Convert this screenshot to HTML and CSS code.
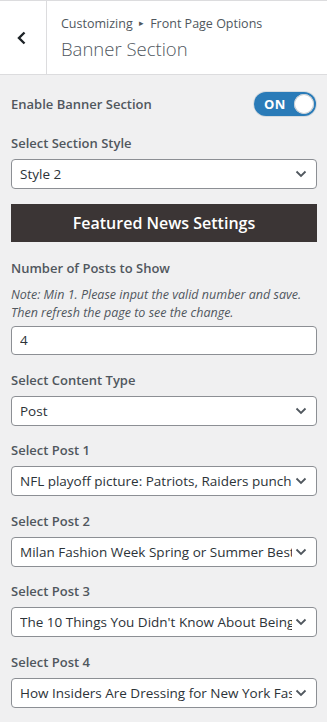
FILE: index.html
```html
<!DOCTYPE html>
<html lang="en">
<head>
    <meta charset="UTF-8">
    <meta name="viewport" content="width=device-width, initial-scale=1.0">
    <title>Customizing - Banner Section</title>
    <link rel="stylesheet" href="styles.css">
</head>
<body>
    <div class="panel-header">
        <button class="back-btn" aria-label="Back">
            <svg width="12" height="14" viewBox="0 0 12 14">
                <path d="M8.5 1.5 L3 7 L8.5 12.5" fill="none" stroke="#1d2327" stroke-width="2.4"/>
            </svg>
        </button>
        <div class="panel-title">
            <div class="crumbs">Customizing <span class="crumb-arrow">&#9656;</span> Front Page Options</div>
            <h2>Banner Section</h2>
        </div>
    </div>

    <div class="panel-body">
        <div class="toggle-row">
            <span class="control-title">Enable Banner Section</span>
            <span class="toggle">
                <span class="toggle-text">ON</span>
                <span class="toggle-knob"></span>
            </span>
        </div>

        <div class="control">
            <label class="control-title" for="section-style">Select Section Style</label>
            <div class="select-wrap">
                <select id="section-style">
                    <option>Style 2</option>
                </select>
                <svg class="select-arrow" width="12" height="8" viewBox="0 0 12 8"><path d="M1.5 1.5 L6 6 L10.5 1.5" fill="none" stroke="#50575e" stroke-width="1.8"/></svg>
            </div>
        </div>

        <div class="section-heading">Featured News Settings</div>

        <div class="control number-control">
            <label class="control-title note-title" for="post-count">Number of Posts to Show</label>
            <p class="description">Note: Min 1. Please input the valid number and save. Then refresh the page to see the change.</p>
            <input type="text" id="post-count" value="4">
        </div>

        <div class="control">
            <label class="control-title" for="content-type">Select Content Type</label>
            <div class="select-wrap">
                <select id="content-type">
                    <option>Post</option>
                </select>
                <svg class="select-arrow" width="12" height="8" viewBox="0 0 12 8"><path d="M1.5 1.5 L6 6 L10.5 1.5" fill="none" stroke="#50575e" stroke-width="1.8"/></svg>
            </div>
        </div>

        <div class="control">
            <label class="control-title" for="post-1">Select Post 1</label>
            <div class="select-wrap">
                <select id="post-1">
                    <option>NFL playoff picture: Patriots, Raiders punch their tickets</option>
                </select>
                <svg class="select-arrow" width="12" height="8" viewBox="0 0 12 8"><path d="M1.5 1.5 L6 6 L10.5 1.5" fill="none" stroke="#50575e" stroke-width="1.8"/></svg>
            </div>
        </div>

        <div class="control">
            <label class="control-title" for="post-2">Select Post 2</label>
            <div class="select-wrap">
                <select id="post-2">
                    <option>Milan Fashion Week Spring or Summer Best Looks</option>
                </select>
                <svg class="select-arrow" width="12" height="8" viewBox="0 0 12 8"><path d="M1.5 1.5 L6 6 L10.5 1.5" fill="none" stroke="#50575e" stroke-width="1.8"/></svg>
            </div>
        </div>

        <div class="control">
            <label class="control-title" for="post-3">Select Post 3</label>
            <div class="select-wrap">
                <select id="post-3">
                    <option>The 10 Things You Didn't Know About Being a Model</option>
                </select>
                <svg class="select-arrow" width="12" height="8" viewBox="0 0 12 8"><path d="M1.5 1.5 L6 6 L10.5 1.5" fill="none" stroke="#50575e" stroke-width="1.8"/></svg>
            </div>
        </div>

        <div class="control">
            <label class="control-title" for="post-4">Select Post 4</label>
            <div class="select-wrap">
                <select id="post-4">
                    <option>How Insiders Are Dressing for New York Fashion Week</option>
                </select>
                <svg class="select-arrow" width="12" height="8" viewBox="0 0 12 8"><path d="M1.5 1.5 L6 6 L10.5 1.5" fill="none" stroke="#50575e" stroke-width="1.8"/></svg>
            </div>
        </div>
    </div>
</body>
</html>
```

FILE: styles.css
```css
:root {
    --panel-bg: #f0f0f1;
    --border-color: #dcdcde;
    --text-color: #50575e;
    --field-text: #2c3338;
    --field-border: #8c8f94;
    --toggle-blue: #2a7bb8;
    --heading-bg: #3b3535;
}

* {
    box-sizing: border-box;
    margin: 0;
    padding: 0;
}

body {
    font-family: 'Open Sans', 'Noto Sans', sans-serif;
    font-size: 13px;
    color: var(--text-color);
    background-color: var(--panel-bg);
}

.panel-header {
    display: flex;
    background: white;
    border-top: 1px solid var(--border-color);
    border-bottom: 1px solid var(--border-color);
}

.back-btn {
    width: 47px;
    flex-shrink: 0;
    display: flex;
    align-items: center;
    justify-content: center;
    background: white;
    border: none;
    border-right: 1px solid var(--border-color);
    padding-right: 2px;
}

.panel-title {
    padding: 13px 14px 12px;
}

.crumbs {
    font-size: 12.5px;
    line-height: 18px;
    color: var(--text-color);
}

.crumb-arrow {
    font-size: 9px;
    vertical-align: 2px;
    margin: 0 3px;
}

.panel-title h2 {
    margin-top: 3px;
    font-size: 18.5px;
    font-weight: 300;
    line-height: 26px;
    color: var(--text-color);
}

.panel-body {
    padding: 17px 10px 14px 11px;
}

.control-title {
    display: block;
    font-weight: 600;
    line-height: 20px;
    margin-bottom: 6px;
}

.toggle-row {
    display: flex;
    justify-content: space-between;
    align-items: center;
    height: 24px;
    margin-bottom: 17px;
    padding-right: 1px;
}

.toggle-row .control-title {
    margin-bottom: 0;
}

.toggle {
    width: 62px;
    height: 24px;
    border-radius: 12px;
    background: var(--toggle-blue);
    box-shadow: 0 0 0 1px #d5dbe0;
    display: flex;
    align-items: center;
    justify-content: space-between;
    padding: 0 2px 0 10px;
}

.toggle-text {
    color: white;
    font-weight: 700;
    font-size: 13px;
    letter-spacing: 0.5px;
}

.toggle-knob {
    width: 20px;
    height: 20px;
    border-radius: 50%;
    background: white;
    box-shadow: inset 0 0 0 1px #c9cdd1;
}

.control {
    margin-bottom: 14.5px;
}

.number-control {
    margin-bottom: 15px;
}

.select-wrap {
    position: relative;
}

select,
input[type="text"] {
    display: block;
    width: 100%;
    height: 30px;
    border: 1px solid var(--field-border);
    border-radius: 4px;
    background: white;
    font-family: inherit;
    font-size: 13.5px;
    color: var(--field-text);
}

select {
    appearance: none;
    -webkit-appearance: none;
    padding: 0 24px 0 8px;
}

input[type="text"] {
    height: 29px;
    padding: 0 8px;
}

.select-arrow {
    position: absolute;
    right: 10px;
    top: 11px;
    pointer-events: none;
}

.section-heading {
    margin: 5px 0 16px;
    height: 38px;
    line-height: 38px;
    background: var(--heading-bg);
    color: white;
    font-size: 16px;
    font-weight: 600;
    text-align: center;
}

.note-title {
    margin-bottom: 8px;
}

.description {
    font-size: 12.5px;
    font-style: italic;
    line-height: 18px;
    margin-bottom: 4px;
}
```
